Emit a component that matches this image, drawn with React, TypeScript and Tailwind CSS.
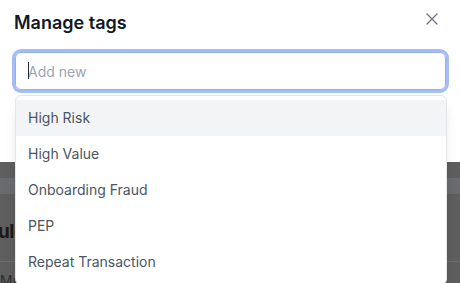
import React from 'react';

const tags = ['High Risk', 'High Value', 'Onboarding Fraud', 'PEP', 'Repeat Transaction'];

const App: React.FC = () => {
    return (
        <div className="relative h-[283px] w-[460px] overflow-hidden bg-[#5e5e5e] font-['Inter',sans-serif]">
            {/* modal */}
            <div className="h-[162px] bg-white pl-[15px] pr-[14px] pt-[9px]">
                <div className="flex items-start justify-between">
                    <h2 className="-ml-px text-lg font-semibold leading-7 text-[#111827]">Manage tags</h2>
                    <button className="mr-[4px] flex h-5 w-5 items-center justify-center text-[#6b7280]">
                        <svg viewBox="0 0 24 24" className="h-5 w-5" fill="none" stroke="currentColor" strokeWidth={1.5} strokeLinecap="round">
                            <path d="M6 18 18 6M6 6l12 12" />
                        </svg>
                    </button>
                </div>
                <div className="relative mt-[15px]">
                    <input
                        className="h-[38px] w-full rounded-md border border-[#97aee8] px-3 text-sm text-[#111827] outline-none ring-[3px] ring-[#a4bdf7] placeholder:text-[#9ca3b4]"
                        placeholder="Add new"
                    />
                    <span className="absolute left-[13px] top-[10px] h-[17px] w-px bg-[#1f2937]" />
                </div>
            </div>

            {/* page behind the overlay */}
            <div className="h-4" />
            <div className="h-4 bg-[#6a6b6f]" />
            <div className="pt-[24px]">
                <h1 className="-ml-[14px] text-[19px] font-bold leading-7 tracking-tight text-[#1a1a1a]">Rules</h1>
            </div>
            <div className="mt-[15px] border-t border-[#6e6e6e] pt-[9px]">
                <p className="text-sm leading-5 text-[#2e2e2e]">Multi</p>
            </div>

            {/* dropdown */}
            <ul className="absolute left-[15px] top-[95px] w-[432px] rounded-md border border-[#e5e7eb] bg-white py-1 shadow-lg">
                {tags.map((tag, i) => (
                    <li
                        key={tag}
                        className={`flex h-9 items-center px-3 text-sm text-[#4b5563] ${i === 0 ? 'bg-[#f3f4f6]' : ''}`}
                    >
                        {tag}
                    </li>
                ))}
            </ul>
        </div>
    );
};

export default App;
